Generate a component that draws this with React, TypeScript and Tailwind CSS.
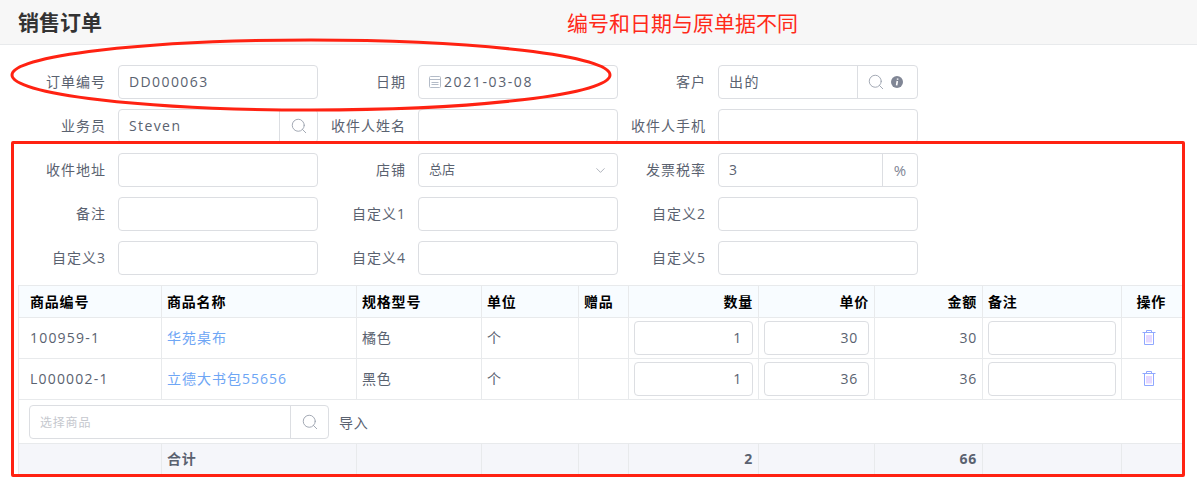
import { ChevronDown, Search } from "lucide-react";
import type { ReactNode } from "react";

const font = { fontFamily: '"Open Sans", "Noto Sans CJK SC", sans-serif' };

const orderRows = [
  { code: "100959-1", name: "华苑桌布", spec: "橘色", unit: "个", qty: "1", price: "30", amount: "30" },
  { code: "L000002-1", name: "立德大书包55656", spec: "黑色", unit: "个", qty: "1", price: "36", amount: "36" },
];

function CalendarIcon() {
  return (
    <svg width="14" height="14" viewBox="0 0 14 14" fill="none" stroke="#b4bcc8" strokeWidth="1" className="shrink-0">
      <rect x="1.5" y="1.5" width="11" height="11" rx="1" />
      <path d="M1.5 4.5h11M3.5 7.5h7M3.5 9.5h7" />
    </svg>
  );
}

function InfoIcon() {
  return (
    <svg width="12" height="12" viewBox="0 0 12 12">
      <circle cx="6" cy="6" r="6" fill="#808695" />
      <path d="M6.6 2.4v1.3M6.3 5L5.6 9.4" stroke="#fff" strokeWidth="1.6" fill="none" />
    </svg>
  );
}

function TrashIcon() {
  return (
    <svg width="16" height="16" viewBox="0 0 16 16" fill="none" stroke="#90a8ff" strokeWidth="1">
      <path d="M1.5 2.5h13M5.5 2.5v-2h5v2M3.5 2.5v12h9v-12" />
      <path d="M6 5v7.5M8 5v7.5M10 5v7.5" stroke="#cdb2ff" />
    </svg>
  );
}

function Field({ label, children }: { label: string; children: ReactNode }) {
  return (
    <div className="flex w-[300px] items-center">
      <label className="w-[88px] pb-[2px] text-right text-[14px] tracking-[1px] text-[#5a6270]">{label}</label>
      <div className="ml-[12px] w-[200px]">{children}</div>
    </div>
  );
}

function TextBox({ value = "", children }: { value?: string; children?: ReactNode }) {
  return (
    <div className="flex h-[34px] items-center rounded border border-[#dcdee2] bg-white text-[14px] tracking-[1.4px] text-[#5a6270]">
      <span className="flex-1 truncate px-[10px] pb-[2px]">{value}</span>
      {children}
    </div>
  );
}

function Addon({ width, children }: { width: string; children: ReactNode }) {
  return (
    <span className={`flex h-full items-center justify-center gap-[6px] border-l border-[#dcdee2] ${width}`}>
      {children}
    </span>
  );
}

const searchIcon = <Search size={18} strokeWidth={1.2} color="#9aa0ad" />;
const th = "border border-[#e8eaec] px-[5px] text-left font-bold text-black";
const td = "border border-[#e8eaec] px-[5px]";

export default function App() {
  return (
    <div className="relative h-[484px] w-[1197px] overflow-hidden bg-white" style={font}>
      <header className="flex h-[45px] items-center border-b border-[#e8eaec] bg-[#f7f7f7] pl-[18px]">
        <h1 className="w-[549px] pt-[1px] text-[21px] font-bold text-[#333]">销售订单</h1>
        <span className="pt-[3px] text-[21px] text-[#ff2a1a]">编号和日期与原单据不同</span>
      </header>

      <div className="flex flex-col gap-[10px] pl-[18px] pt-[20px]">
        <div className="flex">
          <Field label="订单编号"><TextBox value="DD000063" /></Field>
          <Field label="日期">
            <div className="flex h-[34px] items-center gap-[2px] rounded border border-[#dcdee2] pl-[9px] text-[14px] tracking-[1.6px] text-[#5a6270]">
              <CalendarIcon /><span className="pb-[2px]">2021-03-08</span>
            </div>
          </Field>
          <Field label="客户">
            <TextBox value="出的"><Addon width="w-[60px] pr-[5px]">{searchIcon}<InfoIcon /></Addon></TextBox>
          </Field>
        </div>
        <div className="flex">
          <Field label="业务员"><TextBox value="Steven"><Addon width="w-[38px]">{searchIcon}</Addon></TextBox></Field>
          <Field label="收件人姓名"><TextBox /></Field>
          <Field label="收件人手机"><TextBox /></Field>
        </div>
        <div className="flex">
          <Field label="收件地址"><TextBox /></Field>
          <Field label="店铺">
            <div className="flex h-[34px] items-center justify-between rounded border border-[#dcdee2] pl-[10px] pr-[9px] text-[13px] text-[#5a6270]">
              总店<ChevronDown size={15} strokeWidth={1} color="#808695" />
            </div>
          </Field>
          <Field label="发票税率"><TextBox value="3"><Addon width="w-[35px]"><span className="text-[15px] tracking-normal text-[#808695]">%</span></Addon></TextBox></Field>
        </div>
        <div className="flex">
          <Field label="备注"><TextBox /></Field>
          <Field label="自定义1"><TextBox /></Field>
          <Field label="自定义2"><TextBox /></Field>
        </div>
        <div className="flex">
          <Field label="自定义3"><TextBox /></Field>
          <Field label="自定义4"><TextBox /></Field>
          <Field label="自定义5"><TextBox /></Field>
        </div>
      </div>

      <table className="ml-[18px] mt-[10px] w-[1164px] table-fixed border-collapse text-[14px] tracking-[0.8px] text-[#5a6270]">
        <colgroup>
          <col className="w-[143px]" />
          <col className="w-[195px]" />
          <col className="w-[125px]" />
          <col className="w-[97px]" />
          <col className="w-[50px]" />
          <col className="w-[130px]" />
          <col className="w-[116px]" />
          <col className="w-[108px]" />
          <col className="w-[139px]" />
          <col className="w-[61px]" />
        </colgroup>
        <thead>
          <tr className="h-[32px] bg-[#f8fcff]">
            <th className={`${th} pl-[11px]`}>商品编号</th>
            <th className={th}>商品名称</th>
            <th className={th}>规格型号</th>
            <th className={th}>单位</th>
            <th className={th}>赠品</th>
            <th className={`${th} text-right`}>数量</th>
            <th className={`${th} text-right`}>单价</th>
            <th className={`${th} text-right`}>金额</th>
            <th className={th}>备注</th>
            <th className={`${th} pr-[16px] text-right`}>操作</th>
          </tr>
        </thead>
        <tbody>
          {orderRows.map((row) => (
            <tr key={row.code} className="h-[41px]">
              <td className={`${td} pb-[2px] pl-[11px] tracking-[1.2px]`}>{row.code}</td>
              <td className={`${td} pb-[2px] tracking-[1px] text-[#6ea6f5]`}>{row.name}</td>
              <td className={`${td} pb-[2px]`}>{row.spec}</td>
              <td className={`${td} pb-[2px]`}>{row.unit}</td>
              <td className={td} />
              <td className={td}>
                <div className="flex h-[34px] items-center justify-end rounded border border-[#dcdee2] pb-[2px] pr-[10px]">{row.qty}</div>
              </td>
              <td className={td}>
                <div className="flex h-[34px] items-center justify-end rounded border border-[#dcdee2] pb-[2px] pr-[10px]">{row.price}</div>
              </td>
              <td className={`${td} pb-[2px] text-right`}>{row.amount}</td>
              <td className={td}>
                <div className="h-[34px] rounded border border-[#dcdee2]" />
              </td>
              <td className={td}>
                <div className="flex justify-center pr-[6px]"><TrashIcon /></div>
              </td>
            </tr>
          ))}
          <tr className="h-[44px]">
            <td colSpan={10} className={`${td} pl-[10px]`}>
              <div className="flex items-center">
                <div className="flex h-[34px] w-[300px] items-center rounded border border-[#dcdee2]">
                  <span className="flex-1 pl-[10px] pt-[2px] text-[12px] text-[#c5c8ce]">选择商品</span>
                  <Addon width="w-[38px]">{searchIcon}</Addon>
                </div>
                <span className="ml-[10px] pt-px text-[14px]">导入</span>
              </div>
            </td>
          </tr>
          <tr className="h-[32px] bg-[#f5f6fa] font-bold">
            <td className={td} />
            <td className={`${td} pb-[2px]`}>合计</td>
            <td className={td} />
            <td className={td} />
            <td className={td} />
            <td className={`${td} pb-[2px] text-right`}>2</td>
            <td className={td} />
            <td className={`${td} pb-[2px] text-right`}>66</td>
            <td className={td} />
            <td className={td} />
          </tr>
        </tbody>
      </table>

      {/* hand-drawn annotations on top of the form */}
      <svg className="pointer-events-none absolute left-0 top-0" width="640" height="120">
        <ellipse cx="311" cy="75" rx="299" ry="35" fill="none" stroke="#ff2212" strokeWidth="3" />
      </svg>
      <div className="pointer-events-none absolute left-[11px] top-[141px] h-[336px] w-[1174px] rounded-[2px] border-[3px] border-[#ff2212]" />
    </div>
  );
}
